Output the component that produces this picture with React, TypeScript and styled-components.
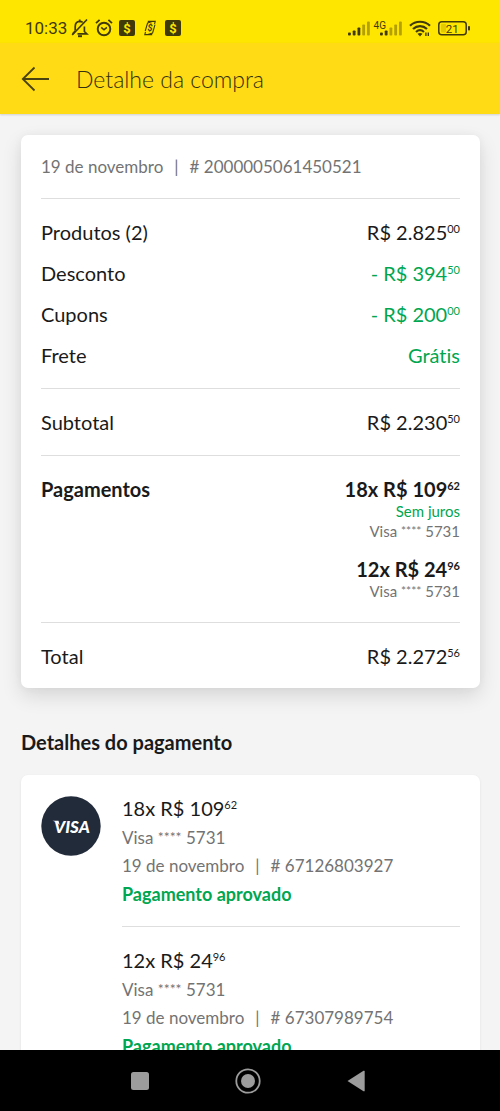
import React from 'react';
import styled, { createGlobalStyle } from 'styled-components';

const ink = '#1a1a1a';
const grey = '#737373';
const green = '#00a650';
const statusInk = '#40390a';

const GlobalStyle = createGlobalStyle`
  * { box-sizing: border-box; }
  body { margin: 0; background: #f4f4f4; }
`;

const Screen = styled.div`
  display: flex;
  flex-direction: column;
  height: 100vh;
  font-family: Lato, 'Liberation Sans', sans-serif;
  font-variant-ligatures: none;
  color: ${ink};
  background: #f4f4f4;
`;

const StatusBar = styled.div`
  flex: none;
  display: flex;
  justify-content: space-between;
  height: 43px;
  padding: 18px 30px 0 25px;
  background: #ffe600;
  color: ${statusInk};
`;

const StatusGroup = styled.div<{ $gap: number }>`
  display: flex;
  align-items: center;
  gap: ${(p) => p.$gap}px;
  height: 20px;
`;

const Clock = styled.time`
  font: 400 17px/20px Roboto, sans-serif;
`;

const StatusIcons = styled.div`
  display: flex;
  align-items: center;
  gap: 6px;
  margin-left: 4px;
`;

const Header = styled.header`
  flex: none;
  display: flex;
  align-items: center;
  gap: 26px;
  height: 71px;
  padding: 0 21px;
  background: #ffdb15;
  box-shadow: 0 1px 2px rgba(0, 0, 0, 0.15);
  z-index: 1;
`;

const IconButton = styled.button`
  display: flex;
  align-items: center;
  justify-content: center;
  padding: 0;
  border: 0;
  background: none;
  color: inherit;
  cursor: pointer;
`;

const Title = styled.h1`
  margin: 0;
  font-size: 23px;
  line-height: 28px;
  font-weight: 300;
  color: #33300f;
`;

const Content = styled.main`
  flex: 1;
  min-height: 0;
  overflow-y: auto;
  scrollbar-width: none;
  padding: 21px 20px 21px 21px;
`;

const Card = styled.section<{ $raised?: boolean }>`
  padding: 20px;
  border-radius: 7px;
  background: #fff;
  box-shadow: ${(p) =>
    p.$raised
      ? '0 8px 20px rgba(0, 0, 0, 0.12), 0 0 8px rgba(0, 0, 0, 0.04)'
      : '0 1px 3px rgba(0, 0, 0, 0.08)'};
`;

const Reference = styled.p`
  margin: 0 0 19px;
  font-size: 17px;
  line-height: 24px;
  color: ${grey};
`;

const Separator = styled.span`
  margin: 0 11px;
`;

const Group = styled.div`
  display: flex;
  flex-direction: column;
  gap: 17px;
  padding: 21px 0;
  border-top: 1px solid #dedede;

  &:last-child { padding-bottom: 0; }
`;

const Row = styled.div<{ $bold?: boolean }>`
  display: flex;
  justify-content: space-between;
  font-size: 20px;
  line-height: 24px;
  font-weight: ${(p) => (p.$bold ? 700 : 400)};
`;

const Value = styled.span<{ $positive?: boolean }>`
  color: ${(p) => (p.$positive ? green : 'inherit')};
`;

const Cents = styled.sup`
  font-size: 11px;
  line-height: 0;
  vertical-align: 7px;
`;

const Installments = styled.div`
  display: flex;
  flex-direction: column;
  gap: 16px;
  text-align: right;
`;

const Mask = styled.span<{ $size: number }>`
  font-size: ${(p) => p.$size}px;
  line-height: 0;
  vertical-align: 2px;
`;

const Small = styled.div<{ $positive?: boolean }>`
  font-size: 15px;
  line-height: 20px;
  font-weight: 400;
  color: ${(p) => (p.$positive ? green : grey)};
`;

const SectionTitle = styled.h2`
  margin: 42px 0 21px;
  font-size: 20px;
  line-height: 24px;
  font-weight: 700;
`;

const PaymentCard = styled(Card)`
  display: flex;
  align-items: flex-start;
  gap: 21px;
`;

const Brand = styled.svg`
  flex: none;
  margin-top: 1px;
`;

const PaymentList = styled.ul`
  flex: 1;
  margin: 0;
  padding: 0;
  list-style: none;
`;

const Payment = styled.li`
  font-size: 17px;
  line-height: 28px;
  color: ${grey};

  & + & {
    margin-top: 18px;
    padding-top: 20px;
    border-top: 1px solid #dedede;
  }
`;

const Amount = styled.div`
  margin-bottom: 3px;
  font-size: 20px;
  line-height: 26px;
  color: ${ink};
`;

const Approved = styled.div`
  font-size: 18px;
  font-weight: 700;
  color: ${green};
`;

const SystemNav = styled.nav`
  flex: none;
  display: flex;
  justify-content: center;
  height: 61px;
  padding-right: 4px;
  background: #000;
  color: #9c9c9c;
  z-index: 1;
`;

const NavButton = styled(IconButton)`
  width: 108px;
`;

function Money({ value, cents }: { value: string; cents: string }) {
  return (
    <>
      {value}
      <Cents>{cents}</Cents>
    </>
  );
}

function CardNumber({ maskSize }: { maskSize: number }) {
  return (
    <>
      Visa <Mask $size={maskSize}>****</Mask> 5731
    </>
  );
}

function DateAndId({ id }: { id: string }) {
  return (
    <>
      19 de novembro<Separator>|</Separator># {id}
    </>
  );
}

function BellOff() {
  return (
    <svg width="18" height="20" viewBox="0 0 18 20" fill="none" stroke="currentColor" strokeWidth="1.7">
      <path d="M4.200 12.500V8.500C4.200 5.500 6 3.600 8.700 3.400c1.200 0 2.200.4 3 1M13.400 8.500v5l2.400 2.300H6.500M1.600 15.800 4.200 13" />
      <path d="M1.200 17 16 1.500" />
      <path d="M7 18.200h4" strokeWidth="2" />
      <path d="M8.700 1.500v2" />
    </svg>
  );
}

function Alarm() {
  return (
    <svg width="18" height="20" viewBox="0 0 18 20" fill="none" stroke="currentColor">
      <circle cx="9" cy="11" r="6.300" strokeWidth="1.900" />
      <path d="M1 5.200 4.600 1.900M17 5.200 13.400 1.900" strokeWidth="1.800" />
      <path d="M6.200 9.400 9 11.800l2.900-2.400" strokeWidth="1.600" />
    </svg>
  );
}

function DollarBox() {
  return (
    <svg width="16" height="16" viewBox="0 0 16 16">
      <rect width="16" height="16" rx="2" fill="currentColor" />
      <text x="8" y="12.600" textAnchor="middle" fontFamily="Roboto, sans-serif" fontWeight="700" fontSize="13" fill="#ffe600">$</text>
    </svg>
  );
}

function DollarNote() {
  return (
    <svg width="18" height="16" viewBox="-3 0 18 16">
      <path d="M1.200 11 3.600 3 9 1.200M11 4.600 8.600 13 3 14.800M3.800 1.400h7.400L10.600 4M8.200 14.600H.8L1.500 12" fill="none" stroke="currentColor" strokeWidth="1.100" />
      <text x="6" y="11" textAnchor="middle" fontFamily="Roboto, sans-serif" fontWeight="700" fontStyle="italic" fontSize="9" fill="currentColor">$</text>
    </svg>
  );
}

function Signal({ level }: { level: number }) {
  return (
    <svg width="22" height="15" viewBox="0 0 22 15" fill="currentColor">
      {[3, 5, 8, 11, 14].map((h, i) => (
        <rect key={h} x={i * 4.75} y={14.5 - h} width="2.800" height={h} rx="0.800" opacity={i < level ? 1 : 0.4} />
      ))}
    </svg>
  );
}

const Network = styled.div`
  display: flex;
  align-items: center;
  margin-left: 4px;
`;

const NetworkLabel = styled.span`
  align-self: flex-start;
  margin-right: -6px;
  font: 400 10px/10px Roboto, sans-serif;
`;

function Wifi() {
  return (
    <svg width="22" height="17" viewBox="0 0 22 17" fill="none" stroke="currentColor" strokeWidth="2.200">
      <path d="M1 5.800C6.500.4 15.500.4 21 5.800" />
      <path d="M4 9c4-3.800 10-3.800 14 0" />
      <path d="M7 12c2.400-2.200 5.600-2.200 8 0" />
      <path d="m8.500 13.800 2.500 2.700 2.500-2.700c-1.500-1.100-3.500-1.100-5 0z" fill="currentColor" stroke="none" />
      <path d="M16.900 12.500v3.500M19.300 12.500v3.500" strokeWidth="1.400" />
    </svg>
  );
}

function Battery() {
  return (
    <svg width="32" height="15" viewBox="0 0 32 15">
      <rect x="0.800" y="0.800" width="27.400" height="13" rx="3" fill="none" stroke="currentColor" strokeWidth="1.500" />
      <rect x="3" y="3" width="5" height="8.600" rx="1" fill="currentColor" opacity="0.150" />
      <rect x="30" y="5" width="2" height="4.500" rx="0.800" fill="currentColor" />
      <text x="14.200" y="11.500" textAnchor="middle" fontFamily="Roboto, sans-serif" fontWeight="400" fontSize="11.500" fill="currentColor">21</text>
    </svg>
  );
}

function VisaBadge() {
  return (
    <Brand width="60" height="60" viewBox="0 0 60 60" role="img" aria-label="Visa">
      <circle cx="30" cy="30" r="29.700" fill="#222b3a" />
      <path d="M11.500 24.700h6l1.200 4.400c-1.500-2.200-4.100-3.500-7.200-4.400z" fill="#fff" />
      <text x="13" y="36.700" fontFamily="Lato, sans-serif" fontWeight="900" fontStyle="italic" fontSize="17" fill="#fff">VISA</text>
    </Brand>
  );
}

const summary = [
  { label: 'Produtos (2)', value: 'R$ 2.825', cents: '00' },
  { label: 'Desconto', value: '- R$ 394', cents: '50', positive: true },
  { label: 'Cupons', value: '- R$ 200', cents: '00', positive: true },
];

const payments = [
  { value: '18x R$ 109', cents: '62', id: '67126803927' },
  { value: '12x R$ 24', cents: '96', id: '67307989754' },
];

export default function App() {
  return (
    <Screen>
      <GlobalStyle />
      <StatusBar>
        <StatusGroup $gap={0}>
          <Clock>10:33</Clock>
          <StatusIcons>
            <BellOff />
            <Alarm />
            <DollarBox />
            <DollarNote />
            <DollarBox />
          </StatusIcons>
        </StatusGroup>
        <StatusGroup $gap={7}>
          <StatusGroup $gap={0}>
            <Signal level={3} />
            <Network>
              <NetworkLabel>4G</NetworkLabel>
              <Signal level={2} />
            </Network>
          </StatusGroup>
          <Wifi />
          <Battery />
        </StatusGroup>
      </StatusBar>

      <Header>
        <IconButton aria-label="Voltar">
          <svg width="29" height="26" viewBox="0 0 29 26" fill="none" stroke="#4a4310" strokeWidth="1.800">
            <path d="M28 13H2M13.500 1.500 1.800 13l11.700 11.500" />
          </svg>
        </IconButton>
        <Title>Detalhe da compra</Title>
      </Header>

      <Content>
        <Card $raised>
          <Reference><DateAndId id="2000005061450521" /></Reference>
          <Group>
            {summary.map((s) => (
              <Row key={s.label}>
                <span>{s.label}</span>
                <Value $positive={s.positive}>
                  <Money value={s.value} cents={s.cents} />
                </Value>
              </Row>
            ))}
            <Row>
              <span>Frete</span>
              <Value $positive>Grátis</Value>
            </Row>
          </Group>
          <Group>
            <Row>
              <span>Subtotal</span>
              <Value><Money value="R$ 2.230" cents="50" /></Value>
            </Row>
          </Group>
          <Group>
            <Row $bold>
              <span>Pagamentos</span>
              <Installments>
                <div>
                  <Money value="18x R$ 109" cents="62" />
                  <Small $positive>Sem juros</Small>
                  <Small><CardNumber maskSize={12} /></Small>
                </div>
                <div>
                  <Money value="12x R$ 24" cents="96" />
                  <Small><CardNumber maskSize={12} /></Small>
                </div>
              </Installments>
            </Row>
          </Group>
          <Group>
            <Row>
              <span>Total</span>
              <Value><Money value="R$ 2.272" cents="56" /></Value>
            </Row>
          </Group>
        </Card>

        <SectionTitle>Detalhes do pagamento</SectionTitle>

        <PaymentCard>
          <VisaBadge />
          <PaymentList>
            {payments.map((p) => (
              <Payment key={p.id}>
                <Amount><Money value={p.value} cents={p.cents} /></Amount>
                <div><CardNumber maskSize={14} /></div>
                <div><DateAndId id={p.id} /></div>
                <Approved>Pagamento aprovado</Approved>
              </Payment>
            ))}
          </PaymentList>
        </PaymentCard>
      </Content>

      <SystemNav aria-label="Sistema">
        <NavButton aria-label="Recentes">
          <svg width="20" height="20" viewBox="0 0 20 20" fill="currentColor"><rect x="1" y="1" width="18" height="18" rx="2.500" /></svg>
        </NavButton>
        <NavButton aria-label="Início">
          <svg width="26" height="26" viewBox="0 0 26 26">
            <circle cx="13" cy="13" r="11.700" fill="none" stroke="currentColor" strokeWidth="1.800" />
            <circle cx="13" cy="13" r="7" fill="currentColor" />
          </svg>
        </NavButton>
        <NavButton aria-label="Voltar ao anterior">
          <svg width="18" height="22" viewBox="0 0 18 22" fill="currentColor"><path d="M.5 11 16.500.8q1.200-.5 1.200.7v19q0 1.200-1.200.7z" /></svg>
        </NavButton>
      </SystemNav>
    </Screen>
  );
}
